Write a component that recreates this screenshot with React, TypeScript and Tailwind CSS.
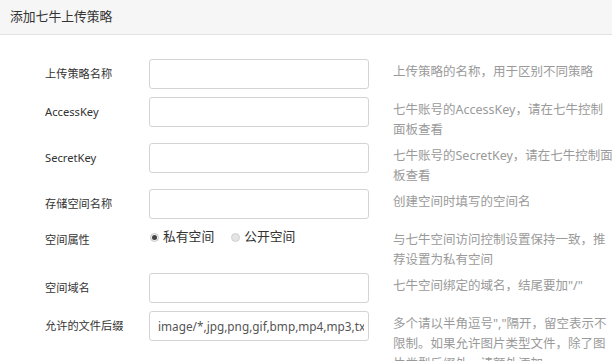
import { ReactNode } from 'react';

const font = "font-['Noto_Sans','Noto_Sans_CJK_SC',sans-serif]";

type Row = {
  label: string;
  field: ReactNode;
  help: string[];
  radio?: boolean;
};

const TextInput = ({ value }: { value?: string }) => (
  <input
    readOnly
    defaultValue={value}
    className="h-[30px] w-[220px] rounded-[3px] border border-[#d4d4d4] bg-white pl-[8px] pr-[4px] text-[11.8px] text-[#555] outline-none"
  />
);

const Radio = ({ checked, label }: { checked?: boolean; label: string }) => (
  <label className="flex items-center gap-[4px] text-[12.8px] text-[#333]">
    {checked ? (
      <span className="flex h-[9px] w-[9px] items-center justify-center rounded-full border border-[#c8c8c8] bg-[#f0f0f0]">
        <span className="h-[5px] w-[5px] rounded-full bg-[#444]" />
      </span>
    ) : (
      <span className="h-[9px] w-[9px] rounded-full border border-[#d0d0d0] bg-[#e4e4e4]" />
    )}
    {label}
  </label>
);

const rows: Row[] = [
  { label: '上传策略名称', field: <TextInput />, help: ['上传策略的名称，用于区别不同策略'] },
  { label: 'AccessKey', field: <TextInput />, help: ['七牛账号的AccessKey，请在七牛控制', '面板查看'] },
  { label: 'SecretKey', field: <TextInput />, help: ['七牛账号的SecretKey，请在七牛控制面', '板查看'] },
  { label: '存储空间名称', field: <TextInput />, help: ['创建空间时填写的空间名'] },
  {
    label: '空间属性',
    radio: true,
    field: (
      <div className="flex h-[20px] items-center gap-[17px] pl-[1px]">
        <Radio checked label="私有空间" />
        <Radio label="公开空间" />
      </div>
    ),
    help: ['与七牛空间访问控制设置保持一致，推', '荐设置为私有空间'],
  },
  { label: '空间域名', field: <TextInput />, help: ['七牛空间绑定的域名，结尾要加"/"'] },
  {
    label: '允许的文件后缀',
    field: <TextInput value="image/*,jpg,png,gif,bmp,mp4,mp3,txt,zip,rar" />,
    help: ['多个请以半角逗号","隔开，留空表示不', '限制。如果允许图片类型文件，除了图', '片类型后缀外，请额外添加一'],
  },
];

export default function App() {
  return (
    <div className={`h-[361px] w-[612px] overflow-hidden bg-white ${font}`}>
      <div className="flex h-[35px] items-center border-b border-[#e2e2e2] bg-[#f6f6f6] pl-[10px] text-[12.8px] text-[#333]">
        添加七牛上传策略
      </div>

      <div className="pt-[24px]">
        {rows.map((row, i) => (
          <div key={i} className="flex items-start">
            <div
              className={`flex w-[149px] items-center pl-[45px] text-[11.2px] text-[#333] ${
                row.radio ? 'h-[26px]' : 'h-[30px]'
              }`}
            >
              {row.label}
            </div>
            <div className="h-[38px] w-[244px]">{row.field}</div>
            <div className="w-[219px] py-[3px] text-[12.5px] leading-[20px] text-[#9a9a9a]">
              {row.help.map((line, j) => (
                <div key={j} className="whitespace-nowrap">
                  {line}
                </div>
              ))}
            </div>
          </div>
        ))}
      </div>
    </div>
  );
}
